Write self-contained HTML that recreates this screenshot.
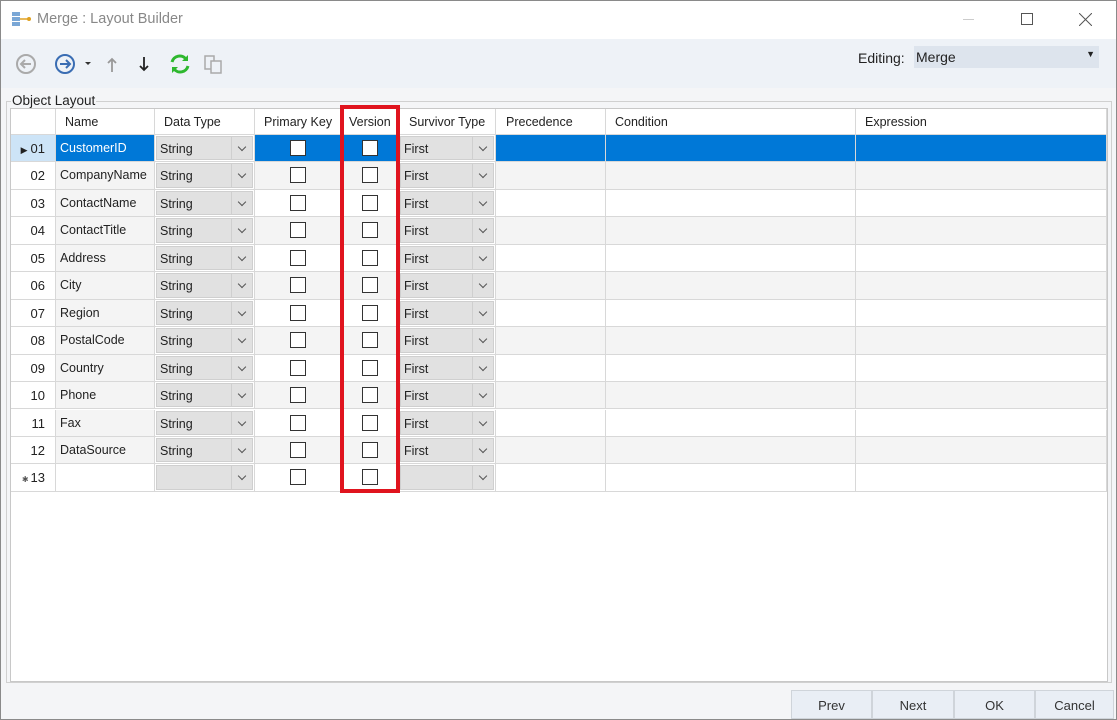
<!DOCTYPE html>
<html><head><meta charset="utf-8"><style>
*{box-sizing:border-box;margin:0;padding:0}
body{width:1117px;height:720px;overflow:hidden;background:#f4f5f7;font-family:"Liberation Sans",sans-serif;font-size:12.5px;color:#222;position:relative}
.win{position:absolute;left:0;top:0;width:1117px;height:720px;border:1px solid #8a8a8a}
.title{position:absolute;left:1px;top:1px;width:1115px;height:38px;background:#fff}
.tb{position:absolute;left:1px;top:39px;width:1115px;height:49px;background:#eef2f7}
.grid{position:absolute;left:10px;top:108px;width:1098px;height:574px;background:#fff;border:1px solid #c8c8c8}
.hdr{position:absolute;top:0;height:26px;border-right:1px solid #d8d8d8;border-bottom:1px solid #d8d8d8;background:#fff;padding:6px 0 0 6px;white-space:nowrap}
.row{position:absolute;left:0;width:1096px;height:27.45px;border-bottom:1px solid #d8d8d8}
.row div{position:absolute;top:0;height:100%;border-right:1px solid #d8d8d8;white-space:nowrap}
.rh{left:0;width:45px;background:#fff;text-align:right;padding:6px 10px 0 0;font-size:13px}
.nm{left:45px;width:99px;background:#f4f4f4;padding:6px 0 0 4px}
.dt{left:144px;width:100px;background:#fff}
.pk{left:244px;width:86px}
.vs{left:330px;width:58px}
.sv{left:388px;width:97px;background:#fff}
.pr{left:485px;width:110px}
.cd{left:595px;width:250px}
.ex{left:845px;width:251px}
.cb{position:absolute;left:1px;top:1px;right:1px;bottom:1px;background:#e1e1e1;border:1px solid #cfcfcf;padding:5px 0 0 3px}
.cb i{position:absolute;right:0;top:0;width:21px;height:100%;border-left:1px solid #cfcfcf}
.cb i:after{content:"";position:absolute;left:7px;top:7px;width:5px;height:5px;border-right:1px solid #555;border-bottom:1px solid #555;transform:rotate(45deg)}
.chk{position:absolute;left:50%;top:5px;margin-left:-8px;width:16px;height:16px;border:1px solid #333;background:#fff}
.alt .pr,.alt .cd,.alt .ex,.alt .pk,.alt .vs{background:#f4f4f4}
.sel .nm,.sel .pk,.sel .vs,.sel .pr,.sel .cd,.sel .ex{background:#0078d7;color:#fff}
.sel .rh{background:#cde4f7}
.btn{position:absolute;top:690px;height:29px;background:#e9eef5;border:1px solid #cfd4da;text-align:center;padding-top:7px;font-size:13px;color:#333}
</style></head><body>
<div class="win"></div>
<div class="title">
<svg style="position:absolute;left:10px;top:10px" width="22" height="18"><rect x="1" y="1" width="8" height="4" fill="#7aa7d6"/><rect x="1" y="6" width="8" height="4" fill="#7aa7d6"/><rect x="1" y="11" width="8" height="4" fill="#7aa7d6"/><path d="M9 8h8" stroke="#e0a020" stroke-width="1.5"/><circle cx="18" cy="8" r="2" fill="#e0a020"/></svg>
<span style="position:absolute;left:36px;top:10px;font-size:14.5px;color:#888">Merge : Layout Builder</span>
<div style="position:absolute;left:962px;top:18px;width:11px;height:1px;background:#ccc"></div>
<div style="position:absolute;left:1020px;top:12px;width:12px;height:12px;border:1px solid #555"></div>
<svg style="position:absolute;left:1078px;top:12px" width="13" height="13"><path d="M0 0L13 13M13 0L0 13" stroke="#555"/></svg>
</div>
<div class="tb">
<svg style="position:absolute;left:13px;top:13px" width="215" height="24">
<circle cx="12" cy="12" r="9" fill="none" stroke="#aaa" stroke-width="2"/><path d="M17 12H8M11 8l-4 4 4 4" fill="none" stroke="#aaa" stroke-width="2"/>
<circle cx="51" cy="12" r="9" fill="none" stroke="#3a6db3" stroke-width="2"/><path d="M46 12h9M52 8l4 4-4 4" fill="none" stroke="#3a6db3" stroke-width="2"/>
<path d="M71 10h6l-3 3z" fill="#333"/>
<path d="M98 20V7M94 11l4-4 4 4" fill="none" stroke="#999" stroke-width="1.8"/>
<path d="M130 5v13M126 14l4 4 4-4" fill="none" stroke="#222" stroke-width="1.8"/>
<path d="M158 10a8 8 0 0 1 14-3M174 14a8 8 0 0 1-14 3" fill="none" stroke="#2eb82e" stroke-width="3"/><path d="M174 3v6h-6zM158 21v-6h6z" fill="#2eb82e"/>
<rect x="191" y="4" width="9" height="13" fill="none" stroke="#aaa" stroke-width="1.5"/><rect x="197" y="9" width="10" height="12" fill="#eef2f7" stroke="#aaa" stroke-width="1.5"/>
</svg>
<span style="position:absolute;left:857px;top:11px;font-size:14px;color:#222">Editing:</span>
<div style="position:absolute;left:913px;top:7px;width:185px;height:22px;background:#dde4ed;font-size:14px;padding:3px 0 0 2px;color:#222">Merge<span style="position:absolute;right:4px;top:3px;font-size:9px">▼</span></div>
</div>
<div style="position:absolute;left:6px;top:101px;width:1106px;height:582px;border:1px solid #d0d0d0"></div>
<span style="position:absolute;left:11px;top:93px;font-size:13.5px;background:#f4f5f7;padding:0 1px">Object Layout</span>
<div class="grid">
<div class="hdr" style="left:0;width:45px"></div>
<div class="hdr" style="left:45px;width:99px;padding-left:9px">Name</div>
<div class="hdr" style="left:144px;width:100px;padding-left:9px">Data Type</div>
<div class="hdr" style="left:244px;width:86px;padding-left:9px">Primary Key</div>
<div class="hdr" style="left:330px;width:58px;padding-left:8px">Version</div>
<div class="hdr" style="left:388px;width:97px;padding-left:10px">Survivor Type</div>
<div class="hdr" style="left:485px;width:110px;padding-left:10px">Precedence</div>
<div class="hdr" style="left:595px;width:250px;padding-left:9px">Condition</div>
<div class="hdr" style="left:845px;width:251px;padding-left:9px">Expression</div>

<div class="row sel" style="top:26px"><div class="rh"><span style="font-size:9px;margin-right:3px">▶</span>01</div><div class="nm">CustomerID</div><div class="dt"><span class="cb">String<i></i></span></div><div class="pk"><span class="chk"></span></div><div class="vs"><span class="chk"></span></div><div class="sv"><span class="cb">First<i></i></span></div><div class="pr"></div><div class="cd"></div><div class="ex"></div></div>
<div class="row alt" style="top:53.45px"><div class="rh">02</div><div class="nm">CompanyName</div><div class="dt"><span class="cb">String<i></i></span></div><div class="pk"><span class="chk"></span></div><div class="vs"><span class="chk"></span></div><div class="sv"><span class="cb">First<i></i></span></div><div class="pr"></div><div class="cd"></div><div class="ex"></div></div>
<div class="row" style="top:80.9px"><div class="rh">03</div><div class="nm">ContactName</div><div class="dt"><span class="cb">String<i></i></span></div><div class="pk"><span class="chk"></span></div><div class="vs"><span class="chk"></span></div><div class="sv"><span class="cb">First<i></i></span></div><div class="pr"></div><div class="cd"></div><div class="ex"></div></div>
<div class="row alt" style="top:108.35px"><div class="rh">04</div><div class="nm">ContactTitle</div><div class="dt"><span class="cb">String<i></i></span></div><div class="pk"><span class="chk"></span></div><div class="vs"><span class="chk"></span></div><div class="sv"><span class="cb">First<i></i></span></div><div class="pr"></div><div class="cd"></div><div class="ex"></div></div>
<div class="row" style="top:135.8px"><div class="rh">05</div><div class="nm">Address</div><div class="dt"><span class="cb">String<i></i></span></div><div class="pk"><span class="chk"></span></div><div class="vs"><span class="chk"></span></div><div class="sv"><span class="cb">First<i></i></span></div><div class="pr"></div><div class="cd"></div><div class="ex"></div></div>
<div class="row alt" style="top:163.25px"><div class="rh">06</div><div class="nm">City</div><div class="dt"><span class="cb">String<i></i></span></div><div class="pk"><span class="chk"></span></div><div class="vs"><span class="chk"></span></div><div class="sv"><span class="cb">First<i></i></span></div><div class="pr"></div><div class="cd"></div><div class="ex"></div></div>
<div class="row" style="top:190.7px"><div class="rh">07</div><div class="nm">Region</div><div class="dt"><span class="cb">String<i></i></span></div><div class="pk"><span class="chk"></span></div><div class="vs"><span class="chk"></span></div><div class="sv"><span class="cb">First<i></i></span></div><div class="pr"></div><div class="cd"></div><div class="ex"></div></div>
<div class="row alt" style="top:218.15px"><div class="rh">08</div><div class="nm">PostalCode</div><div class="dt"><span class="cb">String<i></i></span></div><div class="pk"><span class="chk"></span></div><div class="vs"><span class="chk"></span></div><div class="sv"><span class="cb">First<i></i></span></div><div class="pr"></div><div class="cd"></div><div class="ex"></div></div>
<div class="row" style="top:245.6px"><div class="rh">09</div><div class="nm">Country</div><div class="dt"><span class="cb">String<i></i></span></div><div class="pk"><span class="chk"></span></div><div class="vs"><span class="chk"></span></div><div class="sv"><span class="cb">First<i></i></span></div><div class="pr"></div><div class="cd"></div><div class="ex"></div></div>
<div class="row alt" style="top:273.05px"><div class="rh">10</div><div class="nm">Phone</div><div class="dt"><span class="cb">String<i></i></span></div><div class="pk"><span class="chk"></span></div><div class="vs"><span class="chk"></span></div><div class="sv"><span class="cb">First<i></i></span></div><div class="pr"></div><div class="cd"></div><div class="ex"></div></div>
<div class="row" style="top:300.5px"><div class="rh">11</div><div class="nm">Fax</div><div class="dt"><span class="cb">String<i></i></span></div><div class="pk"><span class="chk"></span></div><div class="vs"><span class="chk"></span></div><div class="sv"><span class="cb">First<i></i></span></div><div class="pr"></div><div class="cd"></div><div class="ex"></div></div>
<div class="row alt" style="top:327.95px"><div class="rh">12</div><div class="nm">DataSource</div><div class="dt"><span class="cb">String<i></i></span></div><div class="pk"><span class="chk"></span></div><div class="vs"><span class="chk"></span></div><div class="sv"><span class="cb">First<i></i></span></div><div class="pr"></div><div class="cd"></div><div class="ex"></div></div>
<div class="row" style="top:355.4px"><div class="rh"><span style="font-size:8px;margin-right:2px;color:#555">✱</span>13</div><div class="nm" style="background:#fff"></div><div class="dt"><span class="cb"><i></i></span></div><div class="pk"><span class="chk"></span></div><div class="vs"><span class="chk"></span></div><div class="sv"><span class="cb"><i></i></span></div><div class="pr"></div><div class="cd"></div><div class="ex"></div></div>
</div>
<div style="position:absolute;left:340px;top:105px;width:60px;height:388px;border:4px solid #e0141e"></div>
<div class="btn" style="left:791px;width:81px">Prev</div>
<div class="btn" style="left:872px;width:82px">Next</div>
<div class="btn" style="left:954px;width:81px">OK</div>
<div class="btn" style="left:1035px;width:79px">Cancel</div>
</body></html>
